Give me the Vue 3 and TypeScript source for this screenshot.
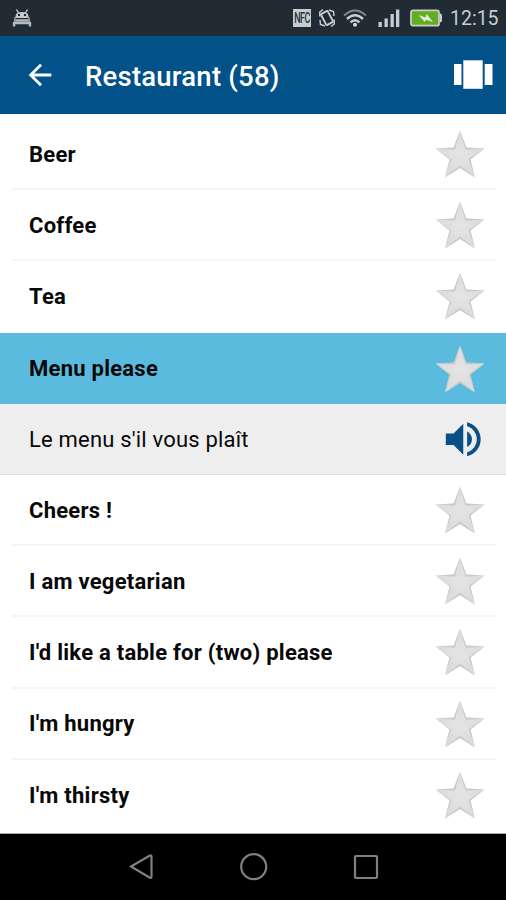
<script setup lang="ts">
interface Phrase {
  text: string
  translation?: string
}

const phrases: Phrase[] = [
  { text: 'Beer' },
  { text: 'Coffee' },
  { text: 'Tea' },
  { text: 'Menu please', translation: "Le menu s'il vous plaît" },
  { text: 'Cheers !' },
  { text: 'I am vegetarian' },
  { text: "I'd like a table for (two) please" },
  { text: "I'm hungry" },
  { text: "I'm thirsty" },
]
</script>

<template>
  <div class="screen">
    <header class="status">
      <svg class="debug" viewBox="0 0 20 18">
        <path d="M3.500 9V7.500Q3.500 3 10 3t6.500 4.500V9z" fill="#c3c8cb" />
        <path d="M4.500 0.500l2 3.500M15.500 0.500l-2 3.500" stroke="#c3c8cb" stroke-width="1.500" />
        <rect x="6" y="5" width="2" height="2" fill="#202b34" />
        <rect x="12" y="5" width="2" height="2" fill="#202b34" />
        <path d="M2 17.500v-3.500h16v3.500M2 11.300h16" fill="none" stroke="#b5bbbf" stroke-width="2.300" />
        <path d="M3 8v4M17 8v4" stroke="#929a9f" stroke-width="1.500" />
      </svg>
      <div class="indicators">
        <span class="nfc"><span>NFC</span></span>
        <svg class="vibrate" viewBox="0 0 18 20">
          <g fill="none" stroke="#c7cccf">
            <rect x="5.200" y="3.800" width="7.600" height="12.400" rx="1" stroke-width="1.900" transform="rotate(-28 9 10)" />
            <path d="M1.800 8.500V4L5 1.500M11 2l4.500 1.500L16 8M16.200 11.500V16L13 18.500M7 18l-4.500-1.500L2 12" stroke-width="1.500" />
          </g>
        </svg>
        <svg class="wifi" viewBox="0 0 24 20">
          <g fill="none" stroke="#c7cccf" stroke-width="2.400">
            <path d="M1 7.500Q12-2.500 23 7.500" stroke="#828b91" stroke-width="1.700" />
            <path d="M4 11Q12 3.500 20 11" />
            <path d="M7.500 14.300Q12 10 16.500 14.300" />
          </g>
          <circle cx="12" cy="16.800" r="2" fill="#d5d9db" />
        </svg>
        <svg class="signal" viewBox="0 0 22 18" fill="#c7cccf">
          <rect x="0.500" y="13" width="3.300" height="5" />
          <rect x="6.500" y="9.500" width="3.300" height="8.500" />
          <rect x="12.500" y="5" width="3.300" height="13" />
          <rect x="18" y="0.500" width="3.300" height="17.500" />
        </svg>
        <svg class="battery" viewBox="0 0 32 18">
          <rect x="1" y="1.300" width="28" height="15.400" rx="2" fill="#62ae20" stroke="#c7cccf" stroke-width="1.800" />
          <path d="M30 4.500q2 0 2 2v5q0 2-2 2z" fill="#c7cccf" />
          <path d="M8.500 6l7 2.500 1-3.500 6.500 8-7-2.300-1.200 2.300z" fill="#e2ecd9" />
        </svg>
        <time class="clock">12:15</time>
      </div>
    </header>

    <div class="toolbar">
      <svg class="back" viewBox="0 0 24 24">
        <path d="M20 11H7.830l5.590-5.590L12 4l-8 8 8 8 1.410-1.410L7.830 13H20z" fill="#fff" />
      </svg>
      <h1>Restaurant (58)</h1>
      <svg class="carousel" viewBox="0 0 39 30" fill="#fff">
        <rect x="0" y="4" width="7.500" height="21" />
        <rect x="9.300" y="0.300" width="19.400" height="28.500" />
        <rect x="30.700" y="4" width="7.800" height="21" />
      </svg>
    </div>

    <main class="list">
      <template v-for="(phrase, index) in phrases" :key="phrase.text">
        <div class="row" :class="{ active: phrase.translation, bare: index === 2 || index === 8 }">
          <span class="phrase">{{ phrase.text }}</span>
          <svg class="star" viewBox="0 0 50 48">
            <defs>
              <radialGradient :id="'silver' + index" cx="50%" cy="50%" r="52%">
                <stop offset="0" stop-color="#e5e5e5" />
                <stop offset="1" stop-color="#d9d9d9" />
              </radialGradient>
            </defs>
            <path d="M25 .5l6.300 17L49.500 18.500 35.500 29.500 39.800 47.500 25 38 10 47.500l4.500-18L.5 18.500l18.200-1z" :fill="`url(#silver${index})`" />
            <path d="M25 .5l6.300 17L49.500 18.500 30.500 19.500zM49.500 18.500L35.500 29.500 39.800 47.500 33.800 29zM39.800 47.500L25 38 10 47.500 25 35.800zM25 .5l-6.300 17L.5 18.500 20 19.500z" fill="#bcbcbc" opacity=".65" />
            <path d="M.5 18.500l14 11L10 47.500l6.400-18z" fill="#c9c9c9" opacity=".7" />
          </svg>
        </div>
        <div v-if="phrase.translation" class="row translated">
          <span class="phrase">{{ phrase.translation }}</span>
          <svg class="speaker" viewBox="0 0 24 24">
            <path d="M3 9v6h4l5 5V4L7 9H3zm13.500 3c0-1.770-1.020-3.290-2.500-4.030v8.050c1.480-.73 2.500-2.250 2.500-4.020zM14 3.230v2.060c2.890.86 5 3.540 5 6.710s-2.110 5.850-5 6.710v2.060c4.010-.91 7-4.490 7-8.770s-2.990-7.860-7-8.770z" fill="#0b4f88" />
          </svg>
        </div>
      </template>
    </main>

    <nav class="navigation">
      <svg viewBox="0 0 30 30"><path d="M5 14.500L23.500 3.800Q25.500 2.800 25.500 4.800v19.700q0 2-2 1z" /></svg>
      <svg viewBox="0 0 30 30"><circle cx="14.700" cy="14.700" r="12.500" /></svg>
      <svg viewBox="0 0 30 30"><rect x="4" y="4" width="22" height="22" rx="1" /></svg>
    </nav>
  </div>
</template>

<style>
body {
  margin: 0;
}
</style>

<style scoped>
.screen {
  width: 506px;
  height: 900px;
  display: flex;
  flex-direction: column;
  overflow: hidden;
  background: #fff;
  font-family: Roboto, "Liberation Sans", sans-serif;
}
.status {
  height: 36px;
  flex: none;
  box-sizing: border-box;
  display: flex;
  justify-content: space-between;
  align-items: center;
  padding: 0 6px 0 12px;
  background: #202b34;
}
.debug {
  width: 20px;
  height: 18px;
}
.indicators {
  display: flex;
  align-items: center;
}
.nfc {
  width: 18px;
  height: 18px;
  display: flex;
  align-items: center;
  justify-content: center;
  background: #c7cccf;
  color: #28323a;
  font-size: 9px;
  font-weight: 500;
  letter-spacing: -0.5px;
}
.nfc span {
  transform: scaleY(1.55);
}
.vibrate {
  width: 18px;
  height: 20px;
  margin-left: 7px;
}
.wifi {
  width: 24px;
  height: 20px;
  margin-left: 7px;
}
.signal {
  width: 22px;
  height: 18px;
  margin-left: 11px;
}
.battery {
  width: 32px;
  height: 18px;
  margin-left: 10px;
}
.clock {
  width: 50px;
  margin: 2px 0 0 8px;
  color: #c7cccf;
  font-size: 19.500px;
  line-height: 36px;
  white-space: nowrap;
}
.toolbar {
  height: 78px;
  flex: none;
  box-sizing: border-box;
  display: flex;
  align-items: center;
  padding: 0 13.500px 0 23px;
  background: #025189;
}
.back {
  width: 34px;
  height: 34px;
}
h1 {
  flex: 1;
  margin: 3px 0 0 28px;
  color: #fff;
  font-size: 27.500px;
  font-weight: 500;
  line-height: 36px;
  letter-spacing: 0.23px;
}
.carousel {
  width: 39px;
  height: 30px;
}
.list {
  flex: 1;
  box-sizing: border-box;
  padding-top: 5px;
  border-bottom: 1px solid #aaa;
}
.row {
  height: 71.200px;
  box-sizing: border-box;
  display: flex;
  align-items: center;
  justify-content: space-between;
  margin: 0 10px 0 12px;
  padding: 0 11px 0 17px;
  border-bottom: 2px solid #f5f5f5;
}
.row.bare {
  border-color: transparent;
}
.row.active,
.row.translated {
  margin: 0;
  padding: 0 21px 0 29px;
}
.row.active {
  background: #5bbbde;
  border-bottom: 0;
}
.row.translated {
  padding-right: 20px;
  background: #eee;
  border-bottom: 1px solid #dedede;
}
.phrase {
  padding-top: 2.500px;
  color: #080808;
  font-size: 22px;
  font-weight: 700;
  line-height: 30px;
  letter-spacing: 0.25px;
  white-space: nowrap;
}
.translated .phrase {
  font-weight: 400;
  letter-spacing: 0.19px;
}
.star {
  width: 50px;
  height: 48px;
  margin-top: 1px;
}
.speaker {
  width: 46.500px;
  height: 46.500px;
}
.navigation {
  height: 66px;
  flex: none;
  box-sizing: border-box;
  display: flex;
  justify-content: center;
  align-items: center;
  gap: 82.500px;
  padding-left: 1.500px;
  background: #000;
}
.navigation svg {
  width: 30px;
  height: 30px;
  fill: none;
  stroke: #808080;
  stroke-width: 2.200;
}
</style>
